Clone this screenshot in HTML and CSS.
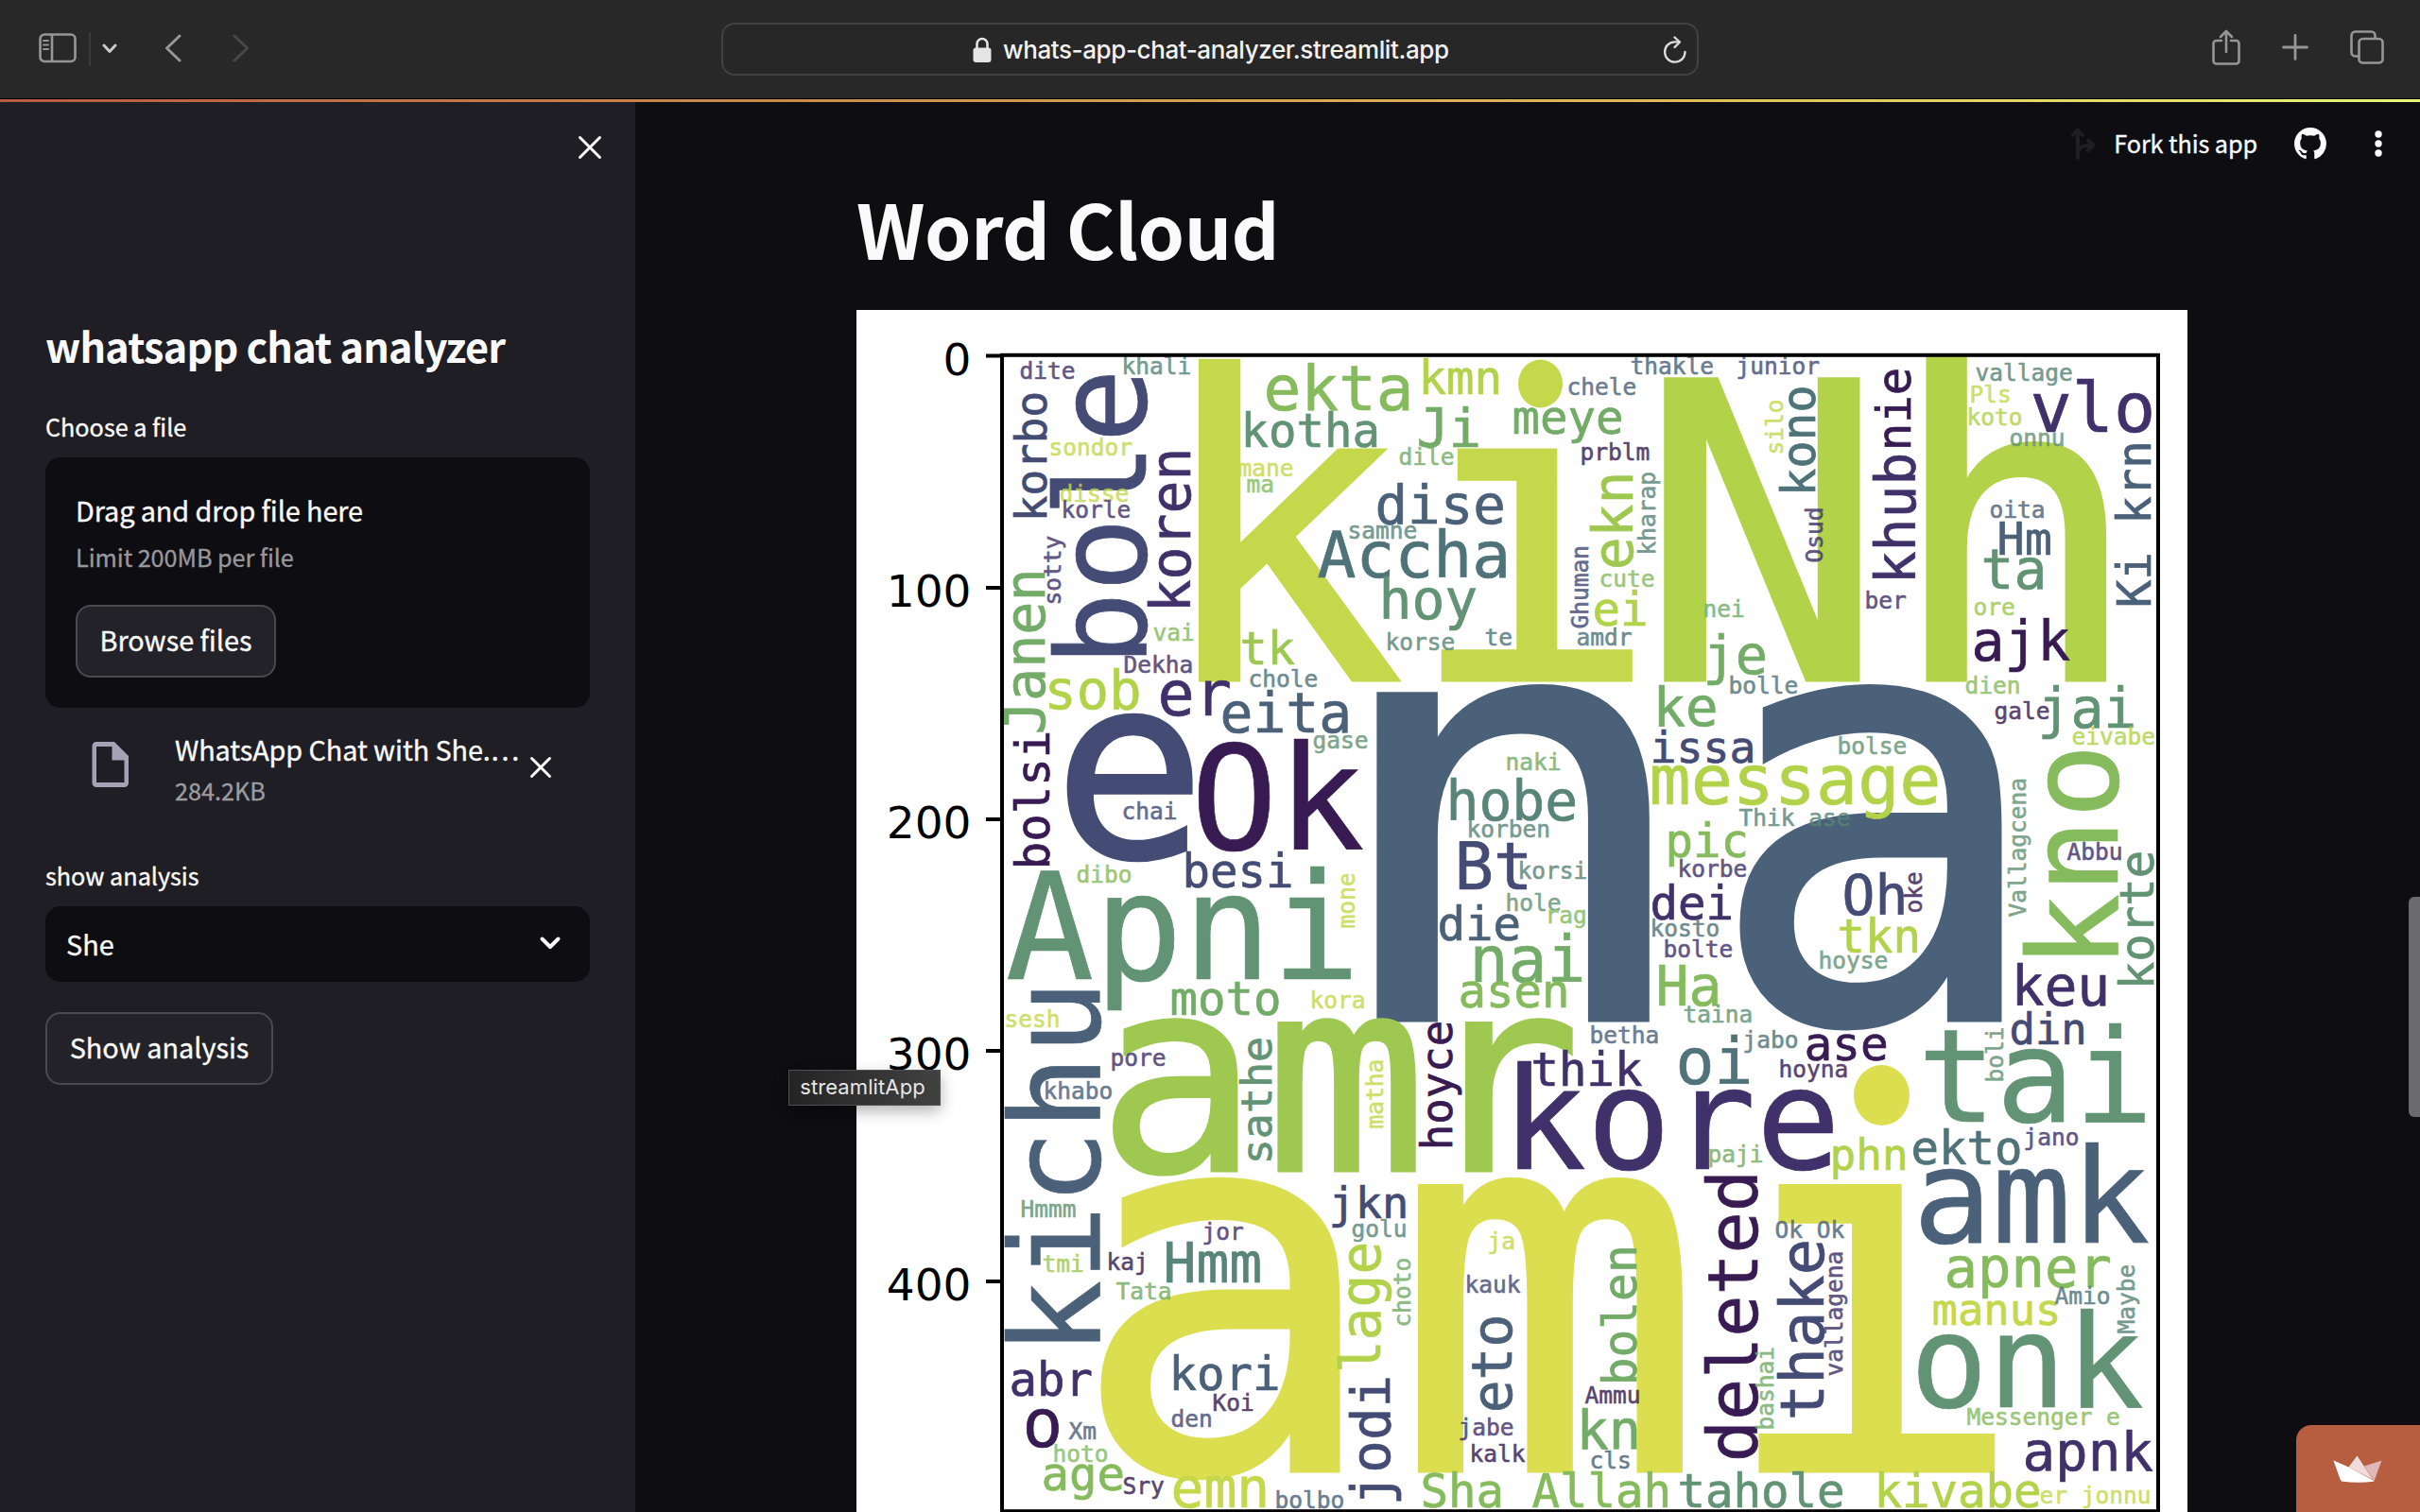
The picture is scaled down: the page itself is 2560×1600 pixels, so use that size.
FILE: index.html
```html
<!DOCTYPE html>
<html lang="en">
<head>
<meta charset="utf-8">
<title>whats-app-chat-analyzer</title>
<link rel="stylesheet" href="styles.css">
</head>
<body>
<header class="toolbar">
  <div class="tools-left">
    <svg class="ic-sidebar" width="40" height="32" viewBox="0 0 40 32" fill="none" stroke="#969696" stroke-width="2.6"><rect x="1.5" y="1.5" width="37" height="28.5" rx="4.5"/><path d="M14 2v28"/><path d="M5 8h5M5 12.500h5M5 17h5" stroke-width="2" stroke-linecap="round"/></svg>
    <span class="sep"></span>
    <svg class="ic-down" width="16" height="12" viewBox="0 0 16 12" fill="none" stroke="#cacaca" stroke-width="3" stroke-linecap="round" stroke-linejoin="round"><path d="M2 2l6 6.500L14 2"/></svg>
    <svg class="ic-back" width="18" height="32" viewBox="0 0 18 32" fill="none" stroke="#979797" stroke-width="3" stroke-linecap="round" stroke-linejoin="round"><path d="M16 3L2.500 16L16 29"/></svg>
    <svg class="ic-fwd" width="18" height="32" viewBox="0 0 18 32" fill="none" stroke="#484848" stroke-width="3" stroke-linecap="round" stroke-linejoin="round"><path d="M2 3l13.500 13L2 29"/></svg>
  </div>
  <div class="address">
    <svg width="20" height="28" viewBox="0 0 20 28"><rect x="0.500" y="11.500" width="19" height="15.500" rx="3" fill="#e4e4e4"/><path d="M4.500 12V7.500a5.500 5.500 0 0 1 11 0V12" fill="none" stroke="#e4e4e4" stroke-width="2.600"/></svg>
    <span class="url">whats-app-chat-analyzer.streamlit.app</span>
    <svg class="reload" width="26" height="30" viewBox="0 0 26 30" fill="none" stroke="#dcdcdc" stroke-width="2.300" stroke-linecap="round" stroke-linejoin="round"><path d="M23.500 17a10.700 10.700 0 1 1-10.700-10.700h4.500"/><path d="M12.500 1.500l5.500 5L12.500 12"/></svg>
  </div>
  <div class="tools-right">
    <svg width="30" height="38" viewBox="0 0 30 38" fill="none" stroke="#969696" stroke-width="2.600" stroke-linecap="round" stroke-linejoin="round"><path d="M10 12H4.500a3 3 0 0 0-3 3v18.500a3 3 0 0 0 3 3h21a3 3 0 0 0 3-3V15a3 3 0 0 0-3-3H20"/><path d="M15 24V2M9 8l6-6 6 6"/></svg>
    <svg width="28" height="28" viewBox="0 0 28 28" stroke="#969696" stroke-width="2.800" stroke-linecap="round"><path d="M14 1.500v25M1.500 14h25"/></svg>
    <svg width="36" height="36" viewBox="0 0 36 36" fill="none" stroke="#969696" stroke-width="2.600"><path d="M9.500 27.500H5.500a4 4 0 0 1-4-4V5.500a4 4 0 0 1 4-4h17a4 4 0 0 1 4 4v3.500"/><rect x="9.500" y="9" width="25" height="25.500" rx="4"/></svg>
  </div>
</header>
<div class="rainbow"></div>
<div class="app">
  <aside class="sidebar">
    <div class="side-top"><svg width="26" height="26" viewBox="0 0 26 26" stroke="#fafafa" stroke-width="3" stroke-linecap="round"><path d="M2.500 2.500l21 21M23.500 2.500l-21 21"/></svg></div>
    <h1 class="side-title">whatsapp chat analyzer</h1>
    <label class="label">Choose a file</label>
    <section class="drop">
      <span class="drop-main">Drag and drop file here</span>
      <span class="drop-sub">Limit 200MB per file</span>
      <button class="btn browse">Browse files</button>
    </section>
    <div class="file">
      <svg class="file-ic" width="40" height="48" viewBox="0 0 40 48"><path fill="#a4a2b4" fill-rule="evenodd" d="M5 0h19l15 15v28.500a4.500 4.500 0 0 1-4.500 4.500H5a4.500 4.500 0 0 1-4.500-4.500v-39A4.500 4.500 0 0 1 5 0zM5 5v38h29.500V19.500H21.500V5z"/></svg>
      <div class="file-text"><span class="file-name">WhatsApp Chat with She.…</span><span class="file-size">284.2KB</span></div>
      <svg class="file-x" width="24" height="24" viewBox="0 0 24 24" stroke="#fafafa" stroke-width="3" stroke-linecap="round"><path d="M2.500 2.500l19 19M21.500 2.500l-19 19"/></svg>
    </div>
    <label class="label second">show analysis</label>
    <div class="select"><span>She</span><svg width="24" height="16" viewBox="0 0 24 16" fill="none" stroke="#fafafa" stroke-width="4" stroke-linecap="round" stroke-linejoin="round"><path d="M3.500 3.500l8.500 8.500 8.500-8.500"/></svg></div>
    <button class="btn show">Show analysis</button>
  </aside>
  <main class="main">
    <nav class="app-nav">
      <svg class="fork" width="26" height="34" viewBox="0 0 26 34" fill="none" stroke="#1f1f24" stroke-width="4" stroke-linecap="round" stroke-linejoin="round"><path d="M7 32V3M2 8l5-5.500L12 8M7 28c0-7 5-9.500 15-9.500M18 13.500l5.500 5-5.500 5.500"/></svg>
      <span class="fork-text">Fork this app</span>
      <svg class="github" width="34" height="34" viewBox="0 0 16 16"><path fill="#fafafa" d="M8 0C3.580 0 0 3.580 0 8c0 3.540 2.290 6.530 5.470 7.590.4.070.55-.17.55-.38 0-.19-.01-.82-.01-1.490-2.010.37-2.530-.49-2.690-.94-.09-.23-.48-.94-.82-1.130-.28-.15-.68-.52-.01-.53.63-.01 1.080.58 1.230.82.72 1.210 1.870.87 2.330.66.070-.52.28-.87.51-1.070-1.780-.2-3.640-.89-3.640-3.950 0-.87.31-1.590.82-2.150-.08-.2-.36-1.020.08-2.120 0 0 .67-.21 2.200.82.64-.18 1.320-.27 2-.27s1.360.09 2 .27c1.530-1.040 2.200-.82 2.200-.82.44 1.100.16 1.920.08 2.120.51.56.82 1.270.82 2.150 0 3.070-1.870 3.750-3.650 3.950.29.25.54.73.54 1.480 0 1.070-.01 1.930-.01 2.200 0 .21.15.46.55.38A8.010 8.010 0 0 0 16 8c0-4.420-3.580-8-8-8z"/></svg>
      <svg width="10" height="30" viewBox="0 0 10 30" fill="#fafafa"><circle cx="5" cy="5" r="3.700"/><circle cx="5" cy="15" r="3.700"/><circle cx="5" cy="25" r="3.700"/></svg>
    </nav>
    <h2 class="heading">Word Cloud</h2>
    <svg class="figure" width="1408" height="1272" viewBox="906 328 1408 1272">
      <rect x="906" y="328" width="1408" height="1272" fill="#fff"/>
      <g class="w big">
        <text class="c12" x="1218" y="720" dx="0 1" font-size="446">ki</text>
        <text class="c11" x="1732" y="720" font-size="438">N<tspan dx="0.500" font-size="449">h</tspan></text>
        <rect x="1590" y="377" width="80" height="72" fill="#fff"/>
        <ellipse class="c12" cx="1629.500" cy="406" rx="23.500" ry="25.500"/>
        <text class="c4" transform="translate(1393 1080) scale(1.078 1)" font-size="633">n</text>
        <text class="c4" transform="translate(1802.500 1080) scale(0.958 1)" font-size="633">a</text>
        <text class="c10" x="1160" dx="0 5.500 -9" y="1239" font-size="286">amr</text>
        <text class="c13" x="1130" dx="0 9 9" y="1557" font-size="553">ami</text>
        <rect x="1950" y="1110" width="80" height="92" fill="#fff"/>
        <ellipse class="c13" cx="1990.500" cy="1159" rx="29.500" ry="32"/>
        <text class="c3" x="1114" y="907" font-size="269">e</text>
      </g>
      <g class="w mid" transform="translate(0.500 0.300)">
        <text class="c2" x="1588" y="1237" font-size="149">kore</text>
        <text class="c1" x="1259" y="899" font-size="153">Ok</text>
        <text class="c7" x="1063" y="1036" font-size="156">Apni</text>
        <text class="c7" x="2028" y="1187" font-size="138">tai</text>
        <text class="c4" x="2023" y="1315" font-size="139">amk</text>
        <text class="c7" x="2020" y="1489" font-size="137">onk</text>
        <text class="c11" x="1104" y="750" font-size="57">sob</text>
        <text class="c2" x="1224" y="757" font-size="65">er</text>
        <text class="c4" x="1290" y="775" font-size="58">eita</text>
        <text class="c10" x="1311" y="703" font-size="48.500">tk</text>
        <text class="c9" x="1336" y="434" font-size="66">ekta</text>
        <text class="c7" x="1312" y="473" font-size="49">kotha</text>
        <text class="c11" x="1500" y="417" font-size="49">kmn</text>
        <text class="c8" x="1498" y="473" font-size="57">Ji</text>
        <text class="c8" x="1599" y="459" font-size="49">meye</text>
        <text class="c4" x="1454" y="554" font-size="57.500">dise</text>
        <text class="c5" x="1393" y="611" font-size="68">Accha</text>
        <text class="c7" x="1458" y="655" font-size="58">hoy</text>
        <text class="c11" x="1684" y="662" font-size="49">ei</text>
        <text class="c8" x="1801" y="713" font-size="57">je</text>
        <text class="c8" x="1748" y="768" font-size="57.500">ke</text>
        <text class="c3" x="1745" y="807" font-size="46.500">issa</text>
        <text class="c2" x="2147" y="457" font-size="73.500">vlo</text>
        <text class="c4" x="2112" y="587" font-size="48.500">Hm</text>
        <text class="c7" x="2095" y="623" font-size="58">ta</text>
        <text class="c1" x="2085" y="699" font-size="58">ajk</text>
        <text class="c7" x="2155" y="770" font-size="58">jai</text>
        <text class="c11" x="1744" y="851" font-size="73.300">message</text>
        <text class="c3" x="1948" y="968" font-size="58">Oh</text>
        <text class="c11" x="1943" y="1008" font-size="49">tkn</text>
        <text class="c2" x="2127" y="1064" font-size="58">keu</text>
        <text class="c3" x="2125" y="1105" font-size="45.500">din</text>
        <text class="c1" x="1908" y="1122" font-size="49.500">ase</text>
        <text class="c3" x="1250" y="939" font-size="49">besi</text>
        <text class="c8" x="1237" y="1074" font-size="49">moto</text>
        <text class="c6" x="1230" y="1357" font-size="58">Hmm</text>
        <text class="c3" x="1405" y="1289" font-size="47">jkn</text>
        <text class="c2" x="1067" y="1477" font-size="49">abr</text>
        <text class="c1" x="1081" y="1530.500" font-size="71">o</text>
        <text class="c9" x="1101" y="1577" font-size="49">age</text>
        <text class="c12" x="1238" y="1595" font-size="58">emn</text>
        <text class="c4" x="1236" y="1471" font-size="49">kori</text>
        <text class="c9" x="1502" y="1595" font-size="49">Sha Allah</text>
        <text class="c8" x="1667" y="1533" font-size="57">kn</text>
        <text class="c2" x="1619" y="1149" font-size="49">thik</text>
        <text class="c5" x="1772" y="1147" font-size="68">oi</text>
        <text class="c6" x="1529" y="868" font-size="58">hobe</text>
        <text class="c3" x="1538" y="941" font-size="69">Bt</text>
        <text class="c4" x="1520" y="995" font-size="49">die</text>
        <text class="c8" x="1554" y="1039" font-size="68">nai</text>
        <text class="c9" x="1542" y="1066" font-size="49">asen</text>
        <text class="c9" x="1761" y="907" font-size="49">pic</text>
        <text class="c2" x="1745" y="973" font-size="49">dei</text>
        <text class="c9" x="1751" y="1064" font-size="58">Ha</text>
        <text class="c11" x="1935" y="1238" font-size="46">phn</text>
        <text class="c5" x="2021" y="1232" font-size="49">ekto</text>
        <text class="c9" x="2056" y="1362" font-size="59">apner</text>
        <text class="c12" x="2043" y="1402" font-size="45.500">manus</text>
        <text class="c2" x="2139" y="1556" font-size="57.500">apnk</text>
        <text class="c7" x="1774" y="1595" font-size="49">tahole</text>
        <text class="c11" x="1982" y="1595" font-size="49">kivabe</text>
        <text class="c3" font-size="46" transform="translate(1106 552) rotate(-90)">korbo</text>
        <text class="c3" font-size="131" transform="translate(1211 705) rotate(-90)">bole</text>
        <text class="c2" font-size="58" transform="translate(1258 648) rotate(-90)">koren</text>
        <text class="c8" font-size="58.500" transform="translate(1104 777) rotate(-90)">Janen</text>
        <text class="c10" font-size="58" transform="translate(1726 603) rotate(-90)">ekn</text>
        <text class="c5" font-size="49" transform="translate(1919 525) rotate(-90)">kono</text>
        <text class="c2" font-size="58" transform="translate(2025 618) rotate(-90)">khub</text>
        <text class="c1" font-size="49" transform="translate(2020 477) rotate(-90)">nie</text>
        <text class="c4" font-size="49" transform="translate(2274 643) rotate(-90)">Ki krn</text>
        <text class="c9" font-size="132" transform="translate(2239 1025) rotate(-90)">kno</text>
        <text class="c7" font-size="49" transform="translate(2277 1047) rotate(-90)">korte</text>
        <text class="c1" font-size="49" transform="translate(1109 920) rotate(-90)">bolsi</text>
        <text class="c4" font-size="132" transform="translate(1162 1434) rotate(-90)">kichu</text>
        <text class="c7" font-size="45" transform="translate(1344 1232) rotate(-90)">sathe</text>
        <text class="c11" font-size="58" transform="translate(1459 1453) rotate(-90)">lage</text>
        <text class="c3" font-size="57.500" transform="translate(1469 1593) rotate(-90)">jodi</text>
        <text class="c4" font-size="58" transform="translate(1598 1495) rotate(-90)">eto</text>
        <text class="c8" font-size="49.500" transform="translate(1730 1466) rotate(-90)">bolen</text>
        <text class="c1" font-size="45.700" transform="translate(1535 1217) rotate(-90)">hoyce</text>
        <text class="c1" font-size="73.400" transform="translate(1858 1547) rotate(-90)">deleted</text>
        <text class="c3" font-size="64" transform="translate(1928.500 1503) rotate(-90)">thake</text>
      </g>
      <g class="w small" transform="translate(0.500 0.500)">
        <text class="c2" x="1078" y="400">dite</text>
        <text class="c6" x="1186" y="395">khali</text>
        <text class="c12" x="1109" y="481">sondor</text>
        <text class="c12" x="1120" y="530">disse</text>
        <text class="c2" x="1122" y="547">korle</text>
        <text class="c9" x="1219" y="677">vai</text>
        <text class="c2" x="1188" y="711">Dekha</text>
        <text class="c5" x="1320" y="726">chole</text>
        <text class="c12" x="1309" y="503">mane</text>
        <text class="c9" x="1318" y="520">ma</text>
        <text class="c4" x="1657" y="417">chele</text>
        <text class="c4" x="1724" y="395">thakle</text>
        <text class="c3" x="1836" y="395">junior</text>
        <text class="c8" x="1479" y="491">dile</text>
        <text class="c6" x="1425" y="569">samne</text>
        <text class="c6" x="1465" y="687">korse</text>
        <text class="c5" x="1570" y="682">te</text>
        <text class="c1" x="1671" y="486">prblm</text>
        <text class="c9" x="1691" y="620">cute</text>
        <text class="c5" x="1667" y="682">amdr</text>
        <text class="c8" x="1801" y="652">nei</text>
        <text class="c5" x="1828" y="733">bolle</text>
        <text class="c6" x="2089" y="402">vallage</text>
        <text class="c12" x="2083" y="425">Pls</text>
        <text class="c11" x="2080" y="449">koto</text>
        <text class="c7" x="2125" y="471">onnu</text>
        <text class="c4" x="2104" y="547">oita</text>
        <text class="c10" x="2087" y="650">ore</text>
        <text class="c2" x="1972" y="643">ber</text>
        <text class="c9" x="2078" y="733">dien</text>
        <text class="c1" x="2109" y="760">gale</text>
        <text class="c11" x="2191" y="787">eivabe</text>
        <text class="c7" x="1943" y="797">bolse</text>
        <text class="c6" x="1839" y="873">Thik ase</text>
        <text class="c2" x="2186" y="909">Abbu</text>
        <text class="c7" x="1923" y="1024">hoyse</text>
        <text class="c1" x="1881" y="1139">hoyna</text>
        <text class="c5" x="1843" y="1108">jabo</text>
        <text class="c3" x="1186" y="866">chai</text>
        <text class="c7" x="1388" y="791">gase</text>
        <text class="c9" x="1138" y="933">dibo</text>
        <text class="c12" x="1385" y="1066">kora</text>
        <text class="c12" x="1062" y="1086">sesh</text>
        <text class="c4" x="1103" y="1162">khabo</text>
        <text class="c2" x="1174" y="1127">pore</text>
        <text class="c7" x="1079" y="1287">Hmmm</text>
        <text class="c10" x="1102" y="1345">tmi</text>
        <text class="c1" x="1170" y="1343">kaj</text>
        <text class="c2" x="1271" y="1311">jor</text>
        <text class="c8" x="1180" y="1374">Tata</text>
        <text class="c6" x="1429" y="1308">golu</text>
        <text class="c4" x="1130" y="1522">Xm</text>
        <text class="c9" x="1113" y="1546">hoto</text>
        <text class="c1" x="1187" y="1580">Sry</text>
        <text class="c4" x="1348" y="1595">bolbo</text>
        <text class="c1" x="1282" y="1492">Koi</text>
        <text class="c3" x="1238" y="1509">den</text>
        <text class="c12" x="1573" y="1321">ja</text>
        <text class="c3" x="1549" y="1367">kauk</text>
        <text class="c2" x="1542" y="1518">jabe</text>
        <text class="c1" x="1554" y="1546">kalk</text>
        <text class="c1" x="1676" y="1484">Ammu</text>
        <text class="c4" x="1681" y="1553">cls</text>
        <text class="c4" x="1681" y="1103">betha</text>
        <text class="c8" x="1592" y="814">naki</text>
        <text class="c6" x="1551" y="885">korben</text>
        <text class="c6" x="1605" y="929">korsi</text>
        <text class="c7" x="1592" y="963">hole</text>
        <text class="c9" x="1634" y="976">rag</text>
        <text class="c2" x="1774" y="927">korbe</text>
        <text class="c5" x="1745" y="990">kosto</text>
        <text class="c2" x="1759" y="1012">bolte</text>
        <text class="c7" x="1780" y="1081">taina</text>
        <text class="c8" x="1806" y="1229">paji</text>
        <text class="c4" x="1877" y="1309">Ok Ok</text>
        <text class="c2" x="2140" y="1211">jano</text>
        <text class="c5" x="2173" y="1379">Amio</text>
        <text class="c9" x="2080" y="1507">Messenger e</text>
        <text class="c12" x="2157" y="1590">er jonnu</text>
        <text class="c2" transform="translate(1121 640) rotate(-90)">sotty</text>
        <text class="c6" transform="translate(1750 587) rotate(-90)">kharap</text>
        <text class="c3" transform="translate(1679 665) rotate(-90)">Ghuman</text>
        <text class="c12" transform="translate(1885 481) rotate(-90)">silo</text>
        <text class="c2" transform="translate(1927 595) rotate(-90)">Osud</text>
        <text class="c7" transform="translate(2142 970) rotate(-90)">Vallagcena</text>
        <text class="c1" transform="translate(2032 966) rotate(-90)">oke</text>
        <text class="c7" transform="translate(2118 1145) rotate(-90)">boli</text>
        <text class="c12" transform="translate(1432 982) rotate(-90)">mone</text>
        <text class="c12" transform="translate(1462 1194) rotate(-90)">matha</text>
        <text class="c8" transform="translate(1491 1404) rotate(-90)">choto</text>
        <text class="c8" transform="translate(1875 1513) rotate(-90)">bashai</text>
        <text class="c2" transform="translate(1948 1456) rotate(-90)">vallagena</text>
        <text class="c6" transform="translate(2257 1411) rotate(-90)">Maybe</text>
      </g>
      <rect x="1060" y="375.800" width="1223" height="1223.400" fill="none" stroke="#000" stroke-width="4"/>
      <path d="M1043 376.500h16M1043 622h16M1043 867h16M1043 1112h16M1043 1356h16" stroke="#000" stroke-width="4"/>
      <g class="axis" font-size="47" text-anchor="end">
        <text x="1027.500" y="397">0</text><text x="1027.500" y="642">100</text><text x="1027.500" y="887">200</text><text x="1027.500" y="1132">300</text><text x="1027.500" y="1376">400</text>
      </g>
    </svg>
    <div class="tooltip">streamlitApp</div>
    <div class="scrollbar"></div>
    <div class="badge"><svg width="52" height="29" viewBox="0 0 52 29"><path fill="#fff" d="M0.500 5.500L44 27.500Q26 30 9.500 27.500Q8 27 7.600 25.500z"/><path fill="#f0dcdc" d="M25.500 0.500L42 25.500 16.500 12.500z"/><path fill="#dfb9b9" d="M51.500 5.500L33 11.500 43.500 27z"/><path fill="#fff" d="M0.500 5.500L16.500 12.500 43.500 27 9.500 27.500z"/></svg></div>
  </main>
</div>
</body>
</html>
```
FILE: styles.css
```css
* { box-sizing: border-box; }
body {
  margin: 0;
  width: 2560px;
  height: 1600px;
  overflow: hidden;
  background: #0d0d12;
  color: #fafafa;
  font-family: "Noto Sans CJK JP", "Noto Sans CJK SC", "Open Sans", sans-serif;
}
svg { display: block; flex: none; }

/* browser toolbar */
.toolbar {
  height: 104px;
  background: #282828;
  display: grid;
  grid-template-columns: 763px 1034px 1fr;
}
.tools-left { display: flex; align-items: flex-start; padding-left: 41px; }
.ic-sidebar { margin-top: 35px; }
.sep { width: 2px; height: 36px; margin: 34px 0 0 13px; background: #3b3b3b; }
.ic-down { margin: 46px 0 0 12px; }
.ic-back { margin: 35px 0 0 50px; }
.ic-fwd { margin: 35px 0 0 54px; }
.address {
  height: 56px;
  margin-top: 24px;
  border: 2px solid #414141;
  border-radius: 14px;
  background: #272727;
  display: flex;
  align-items: center;
  padding: 2px 10px 0 264px;
}
.url {
  margin-left: 12px;
  font: 500 26px/52px "Inter", "Liberation Sans", sans-serif;
  letter-spacing: -.4px;
  color: #f2f2f2;
  white-space: nowrap;
}
.reload { margin-left: auto; }
.tools-right { display: flex; align-items: center; padding: 0 38px 4px 543px; justify-content: space-between; }
.rainbow {
  height: 4px;
  border-top: 1px solid #000;
  background: linear-gradient(90deg, #b75c42 0, #c8834a 680px, #dfb65a 1700px, #e8f57a 2560px);
}

/* sidebar */
.app { display: flex; height: 1492px; }
.sidebar { width: 672px; padding: 35px 48px 0; background: #1f1e24; -webkit-text-stroke: .35px; }
.side-top { display: flex; justify-content: flex-end; margin-right: -13px; height: 26px; }
.side-title { margin: 161px 0 0; font-size: 43.2px; line-height: 70px; font-weight: 700; white-space: nowrap; letter-spacing: -.8px; -webkit-text-stroke: 0; }
.label { display: block; margin-top: 32px; font-size: 25.2px; line-height: 38px; }
.drop {
  margin-top: 14px;
  height: 265px;
  padding: 32px 32px 0;
  border-radius: 16px;
  background: #0d0d12;
  display: flex;
  flex-direction: column;
  align-items: flex-start;
}
.drop-main { font-size: 28.8px; line-height: 48px; letter-spacing: -.08px; }
.drop-sub { font-size: 25.2px; line-height: 40px; margin-top: 5px; letter-spacing: -.05px; color: #98989b; }
.btn {
  border: 2px solid #49494e;
  border-radius: 16px;
  background: #232228;
  color: #fafafa;
  font: 400 28.8px/69px "Noto Sans CJK JP", sans-serif;
  height: 77px;
  padding: 0 0 4px;
  text-align: center;
  white-space: nowrap;
  -webkit-text-stroke: .35px;
}
.browse { width: 212px; margin-top: 31px; }
.file { display: flex; height: 120px; padding: 20px 40px 0 49px; align-items: flex-start; }
.file-ic { margin-top: 16px; }
.file-text { display: flex; flex-direction: column; margin-left: 48px; width: 370px; }
.file-name { font-size: 28.8px; line-height: 48px; white-space: nowrap; letter-spacing: -.08px; }
.file-size { font-size: 25.2px; line-height: 38px; color: #9c9ca0; }
.file-x { margin: 31px 0 0 5px; }
.second { margin-top: 38px; }
.select {
  height: 80px;
  margin-top: 14px;
  padding: 0 30px 2px 22px;
  border-radius: 16px;
  background: #0d0d12;
  display: flex;
  align-items: center;
  justify-content: space-between;
  font-size: 28.8px;
}
.show { width: 241px; margin-top: 32px; display: block; }

/* main column */
.main { position: relative; flex: 1; padding-left: 234px; }
.app-nav { display: flex; height: 87px; align-items: center; justify-content: flex-end; padding-right: 39px; }
.fork-text { font-size: 25.2px; margin: 0 39px 0 19px; line-height: 44px; padding-bottom: 1px; -webkit-text-stroke: .35px; letter-spacing: -.07px; }
.github { margin-right: 50px; }
.heading { margin: 0; height: 133px; font-size: 79.2px; line-height: 91px; font-weight: 700; white-space: nowrap; letter-spacing: -.55px; }
.w text { font-family: "DejaVu Sans Mono", monospace; stroke: currentColor; }
.w text, .w ellipse { fill: currentColor; }
.big { stroke-width: 3px; }
.mid { stroke-width: .7px; }
.small { font-size: 24.5px; opacity: .82; stroke-width: .6px; }
.axis { font-family: "DejaVu Sans", sans-serif; }
.c1 { color: #371b52; }
.c2 { color: #40316b; }
.c3 { color: #444b74; }
.c4 { color: #4b6179; }
.c5 { color: #4f7379; }
.c6 { color: #588578; }
.c7 { color: #629374; }
.c8 { color: #73ab68; }
.c9 { color: #85bb5c; }
.c10 { color: #9ec84f; }
.c11 { color: #b2d24a; }
.c12 { color: #c5d84b; }
.c13 { color: #dade4f; }

/* overlays */
.tooltip {
  position: absolute;
  left: 162px;
  top: 1024px;
  width: 161px;
  height: 38px;
  padding-right: 4px;
  border: 1px solid #505050;
  background: linear-gradient(90deg, #242424, #414141);
  box-shadow: 0 6px 16px rgba(0, 0, 0, .3);
  font: 400 22px/35px "Inter", "Liberation Sans", sans-serif;
  letter-spacing: .1px;
  text-align: center;
  color: #e6e6e6;
}
.scrollbar {
  position: absolute;
  right: 0;
  top: 841px;
  width: 12px;
  height: 233px;
  border-radius: 6px 0 0 6px;
  background: #6b6b6d;
}
.badge {
  position: absolute;
  right: 0;
  top: 1400px;
  width: 131px;
  height: 92px;
  padding: 32px 0 0 39px;
  border-radius: 16px 0 0 0;
  background: #b75d40;
}
```
